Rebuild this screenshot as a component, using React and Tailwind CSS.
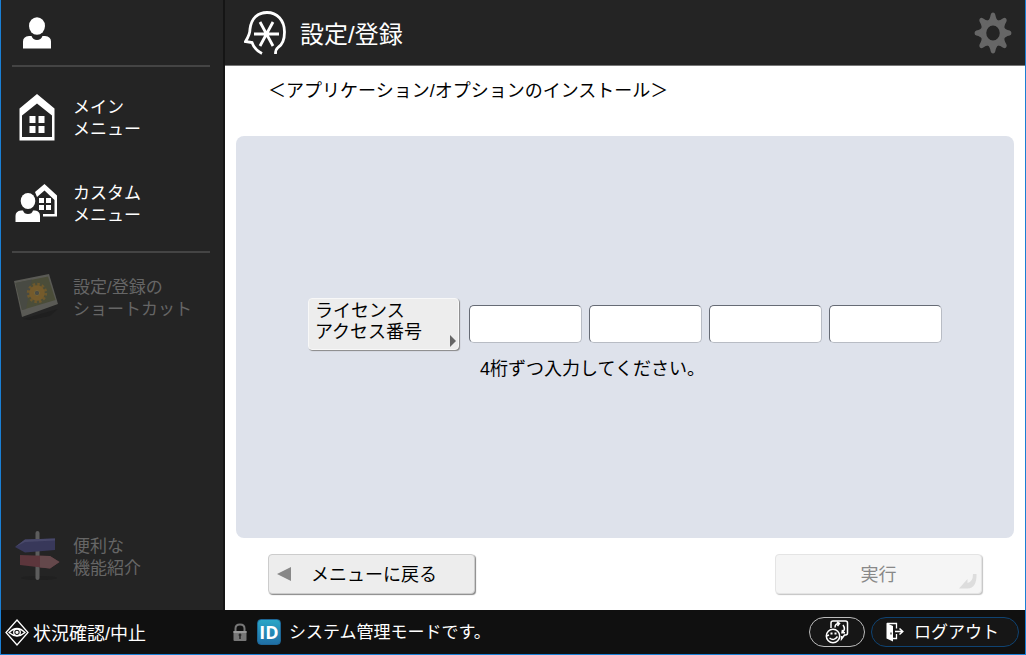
import { useState } from "react";

function UserIcon() {
    return (
        <svg width="28" height="32" viewBox="0 0 28 32" fill="#fff" aria-hidden="true">
            <ellipse cx="14" cy="9" rx="8" ry="8.7" />
            <path d="M0 31.500V24.500Q0 19.500 6 19H8.500Q10 23 14 23Q18 23 19.500 19H22Q28 19.500 28 24.500V31.500Z" />
        </svg>
    );
}

function HomeIcon() {
    return (
        <svg width="36" height="48" viewBox="0 0 36 48" aria-hidden="true">
            <path fillRule="evenodd" fill="#fff" d="M18 1 35.500 15.500V47.500H.500V15.500ZM18 10.500 3 22.500V44H33V22.500Z" />
            <path fill="#fff" d="M10.500 23h6v7h-6zM19.500 23h6v7h-6zM10.500 33h6v7h-6zM19.500 33h6v7h-6z" />
        </svg>
    );
}

function CustomIcon() {
    return (
        <svg width="43" height="40" viewBox="0 0 43 40" fill="#fff" aria-hidden="true">
            <path d="M20 9 29.500 1 42 12.500V33.500H28V31H39.500V17L29.500 7.500 22 14Z" />
            <path d="M24 15h5v5h-5zM31 15h5v5h-5zM24 22h5v5h-5zM31 22h5v5h-5z" />
            <ellipse cx="13" cy="18" rx="7.300" ry="8" />
            <path d="M.500 39V33Q.500 28 6 27.500H8Q9 31 13 31Q17 31 18 27.500H20Q25 28 25 33V39Z" />
        </svg>
    );
}

function ShortcutIcon() {
    return (
        <svg width="46" height="48" viewBox="0 0 46 48" aria-hidden="true">
            <path d="M9 46 44 36 36 43 16 47Z" fill="#1f1f1f" />
            <path d="M0 8 35 1 44 31 8 44Z" fill="#5a5a55" />
            <path d="M1.500 10 34 3.500 41.500 27 8 37Z" fill="#4b4d39" />
            <path d="M1.500 10 18 6.500 12 36 8 37Z" fill="#484a43" />
            <circle cx="23" cy="20" r="8.700" fill="none" stroke="#6d582d" strokeWidth="3" strokeDasharray="2.500 2.055" />
            <circle cx="23" cy="20" r="5.300" fill="none" stroke="#755b2c" strokeWidth="5" />
            <circle cx="23" cy="20" r="2.700" fill="#4b4c44" stroke="#776436" strokeWidth="1" />
        </svg>
    );
}

function SignIcon() {
    return (
        <svg width="46" height="52" viewBox="0 0 46 52" aria-hidden="true">
            <ellipse cx="24" cy="48" rx="18" ry="2" fill="#202020" />
            <rect x="20.500" y="1" width="4" height="49" rx="2" fill="#5c5c5c" />
            <path d="M0 17 10 9.500 40 8.500V20L10 22.500Z" fill="#38385a" />
            <path d="M0 17 10 9.500 40 8.500V10.500L10 12Z" fill="#48486a" />
            <path d="M5 25 35 26 44.500 32 35 38.500 5 35Z" fill="#5c363c" />
            <path d="M25 25.700 35 26 44.500 32 35 38.500 25 37.500Z" fill="#64484b" />
        </svg>
    );
}

function HeadIcon() {
    return (
        <svg width="42" height="44" viewBox="0 0 42 44" fill="none" stroke="#fff" strokeWidth="2.800" aria-hidden="true">
            <path d="M18 42.500C13 40 9.500 36 8 31.500L1.500 30.500C5 25 6 22 6 18C7.500 7 14 1.500 23 1.500C33 1.500 40.500 9 40.500 21C40.500 29 38 34 34 36.500C32 38 31.500 39.500 31.500 43" />
            <path d="M10 23H35M16 11 29 35M29 11 16 35" />
        </svg>
    );
}

function GearIcon() {
    return (
        <svg width="38" height="42" viewBox="-19 -21 38 42" fill="#666" aria-hidden="true">
            <g transform="scale(.9 1)">
                <circle r="10.500" fill="none" stroke="#666" strokeWidth="6" />
                {[0, 45, 90, 135, 180, 225, 270, 315].map((angle) => (
                    <path key={angle} transform={`rotate(${angle})`} d="M-6-12Q-3.500-13.500-2.500-18.500Q-2-20.500 0-20.500Q2-20.500 2.500-18.500Q3.500-13.500 6-12Z" />
                ))}
            </g>
        </svg>
    );
}

function EyeIcon() {
    return (
        <svg width="24" height="27" viewBox="0 0 24 27" fill="none" stroke="#fff" strokeWidth="1.300" aria-hidden="true">
            <path d="M12 1 23 13.500 12 26 1 13.500Z" />
            <path d="M4 13.500Q12 5.500 20 13.500Q12 20.500 4 13.500Z" />
            <circle cx="12" cy="13.300" r="3.300" />
            <circle cx="12" cy="13.300" r="1" fill="#fff" />
        </svg>
    );
}

function LockIcon() {
    return (
        <svg width="14" height="19" viewBox="0 0 14 19" aria-hidden="true">
            <path d="M2.500 9V5.500Q2.500 1.500 7 1.500Q11.500 1.500 11.500 5.500V9" fill="none" stroke="#777" strokeWidth="2" />
            <path d="M.500 8H13.500V17Q13.500 18 12.500 18H1.500Q.500 18 .500 17Z" fill="#777" />
            <path d="M.500 8H13.500V10H.500Z" fill="#999" />
            <path d="M7 10.500a1.500 1.500 0 0 1 .800 2.700V16H6.200V13.200A1.500 1.500 0 0 1 7 10.500Z" fill="#2a2a2a" />
        </svg>
    );
}

function SwitchUserIcon() {
    return (
        <svg width="25" height="26" viewBox="0 0 25 26" fill="none" stroke="#fff" strokeWidth="1.500" aria-hidden="true">
            <path d="M6 9V4Q6 2 8 2H20.500Q22.500 2 22.500 4V14Q22.500 16 20.500 16H19.500L16.500 20V17" />
            <path d="M10 8.500Q10 4.500 14 4.500M12 2.800 14.500 4.500 12.500 7M18 6Q21 10 17.500 13.500M20 13.800 17 13.800 17.500 10.800" />
            <circle cx="8" cy="17" r="6.700" fill="#161616" />
            <path d="M4.500 19Q9 22.500 12.500 17.500" />
            <path d="M6.500 13.500V15.500M10.500 13.500V15.500" strokeWidth="2" />
            <path d="M1.500 17 4 16" />
        </svg>
    );
}

function DoorIcon() {
    return (
        <svg width="18" height="20" viewBox="0 0 18 20" aria-hidden="true">
            <path d="M1 1.500H10.500V6.500M10.500 12V16.500H7" fill="none" stroke="#fff" strokeWidth="1.300" />
            <path d="M.500 1 7 4V19.500L.500 16.500Z" fill="#fff" />
            <path d="M5 10.500v2" stroke="#222" strokeWidth="1.200" />
            <path d="M9 9.500H17M13.500 6.500 16.800 9.500 13.500 12.500" fill="none" stroke="#fff" strokeWidth="1.500" />
        </svg>
    );
}

function NavItem({ icon, lines, disabled }) {
    return (
        <button
            type="button"
            disabled={disabled}
            className="flex w-full items-center text-left text-[17px] leading-[22px] text-white disabled:text-[#666]"
        >
            <span className="flex w-[61px] shrink-0 justify-start">{icon}</span>
            <span className="pt-1">
                {lines[0]}
                <br />
                {lines[1]}
            </span>
        </button>
    );
}

export default function App() {
    const [code, setCode] = useState(["", "", "", ""]);

    const handleCodeChange = (index, value) => {
        const newCode = [...code];
        newCode[index] = value;
        setCode(newCode);
    };

    return (
        <div className="flex min-h-screen flex-col border-x border-b border-[#1a7fd4] bg-white font-['Liberation_Sans','Noto_Sans_CJK_JP',sans-serif] text-lg text-black">
            <div className="flex flex-1">
                {/* Side menu */}
                <nav className="flex w-56 shrink-0 flex-col border-r-2 border-[#151515] bg-[#242424] pr-[13px] pl-[11px]">
                    <div className="flex h-[67px] items-center border-b-2 border-[#444] pl-[11px]">
                        <button type="button" aria-label="ユーザー">
                            <UserIcon />
                        </button>
                    </div>
                    <div className="flex flex-col gap-[38px] border-b-2 border-[#444] pt-[26px] pb-6">
                        <NavItem icon={<span className="pl-[7px]"><HomeIcon /></span>} lines={["メイン", "メニュー"]} />
                        <NavItem icon={<span className="pl-[3px]"><CustomIcon /></span>} lines={["カスタム", "メニュー"]} />
                    </div>
                    <div className="pt-5">
                        <NavItem disabled icon={<span className="pl-[2px]"><ShortcutIcon /></span>} lines={["設定/登録の", "ショートカット"]} />
                    </div>
                    <div className="mt-auto pb-7">
                        <NavItem disabled icon={<span className="pl-[3px]"><SignIcon /></span>} lines={["便利な", "機能紹介"]} />
                    </div>
                </nav>

                <div className="flex flex-1 flex-col">
                    <header className="flex h-[66px] items-center border-b border-[#777] bg-[#242424] pr-[13px] pl-[19px]">
                        <HeadIcon />
                        <h1 className="ml-[14px] pt-1 text-2xl leading-8 text-white">設定/登録</h1>
                        <button type="button" aria-label="設定" className="ml-auto">
                            <GearIcon />
                        </button>
                    </header>

                    <main className="flex flex-1 flex-col px-[11px] pb-4">
                        <h2 className="mt-3 mb-8 pl-8 leading-[26px]">＜アプリケーション/オプションのインストール＞</h2>

                        {/* License number */}
                        <section className="flex flex-1 items-center justify-center rounded-lg bg-[#dee2eb] pt-[6px]">
                            <div>
                                <div className="flex items-center gap-[7px]">
                                    <button
                                        type="button"
                                        className="relative mr-[3px] h-[52px] w-[151px] rounded-sm border border-[#f8f8f8] bg-[#ededed] pb-1 pl-[6px] text-left leading-[21px] shadow-[1px_1px_1px_#888]"
                                    >
                                        ライセンス
                                        <br />
                                        アクセス番号
                                        <svg className="absolute right-[2px] bottom-[2px]" width="6" height="12" viewBox="0 0 6 12" aria-hidden="true">
                                            <path d="M0 0 6 6 0 12Z" fill="#666" />
                                        </svg>
                                    </button>
                                    {code.map((value, index) => (
                                        <input
                                            key={index}
                                            type="text"
                                            maxLength={4}
                                            aria-label={`ライセンスアクセス番号 ${index + 1}`}
                                            value={value}
                                            onChange={(e) => handleCodeChange(index, e.target.value)}
                                            className="h-[38px] w-[113px] rounded-[5px] border border-[#b8bcc4] border-t-[#666b75] border-l-[#666b75] bg-white px-2"
                                        />
                                    ))}
                                </div>
                                <p className="mt-[6px] pl-[172px] leading-[26px]">4桁ずつ入力してください。</p>
                            </div>
                        </section>

                        <div className="mt-4 flex justify-between px-8">
                            <button
                                type="button"
                                className="flex h-10 w-[207px] items-center rounded-sm border border-[#ccc] bg-[#ededed] pl-2 shadow-[1px_1px_1px_#888]"
                            >
                                <svg width="14" height="14" viewBox="0 0 14 14" aria-hidden="true">
                                    <path d="M14 0V14L0 7Z" fill="#888" />
                                </svg>
                                <span className="ml-5 pt-[2px]">メニューに戻る</span>
                            </button>
                            <button
                                type="button"
                                disabled
                                className="relative h-10 w-[207px] rounded-sm border border-[#e4e4e4] bg-[#f5f5f5] pt-[2px] text-[#888] shadow-[1px_1px_1px_#c4c4c4]"
                            >
                                実行
                                <svg className="absolute right-1 bottom-1" width="18" height="15" viewBox="0 0 18 15" aria-hidden="true">
                                    <path d="M0 14.500 8.500 5V9Q14 8 14 0H17.500Q18 14 8.500 14.500Z" fill="#ddd" />
                                </svg>
                            </button>
                        </div>
                    </main>
                </div>
            </div>

            {/* Status bar */}
            <footer className="flex h-11 items-center bg-[#101010] text-white">
                <button type="button" className="flex w-56 items-center gap-1 pl-1">
                    <EyeIcon />
                    <span className="pt-[3px]">状況確認/中止</span>
                </button>
                <div className="flex items-center pl-2 text-[17px]">
                    <LockIcon />
                    <span className="mr-2 ml-[10px] flex h-[26px] w-6 items-center justify-center rounded-[4px] border border-[#1d6695] bg-linear-to-b from-[#2aa6c6] to-[#206fa6] font-['Open_Sans',sans-serif] text-lg font-bold">
                        ID
                    </span>
                    <span className="pt-[3px]">システム管理モードです。</span>
                </div>
                <div className="mr-[6px] ml-auto flex gap-[6px]">
                    <button type="button" aria-label="切り替え" className="flex h-[30px] w-14 items-center justify-center rounded-full border border-[#bbb] bg-[#161616]">
                        <SwitchUserIcon />
                    </button>
                    <button type="button" className="flex h-[30px] w-[148px] items-center gap-[10px] rounded-full border border-[#0f4372] bg-[#161616] pl-[14px] text-[17px]">
                        <DoorIcon />
                        <span className="pt-[3px]">ログアウト</span>
                    </button>
                </div>
            </footer>
        </div>
    );
}
